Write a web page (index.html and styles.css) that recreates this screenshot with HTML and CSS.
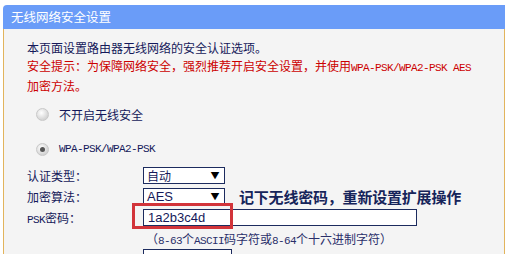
FILE: index.html
```html
<!DOCTYPE html>
<html>
  <head>
    <meta charset="utf-8">
    <link rel="stylesheet" href="styles.css">
  </head>
  <body>
    <div class="panel">
      <div class="panel-title">无线网络安全设置</div>
      <div class="panel-body">
        <p class="intro">本页面设置路由器无线网络的安全认证选项。</p>
        <p class="warn">安全提示：为保障网络安全，强烈推荐开启安全设置，并使用<span class="en">WPA-PSK/WPA2-PSK AES</span>加密方法。</p>

        <div class="radio-row first">
          <span class="radio"></span>
          <span>不开启无线安全</span>
        </div>
        <div class="radio-row">
          <span class="radio checked"></span>
          <span class="en">WPA-PSK/WPA2-PSK</span>
        </div>

        <div class="form-row">
          <label>认证类型：</label>
          <div class="select"><span>自动</span><span class="arrow">▼</span></div>
        </div>
        <div class="form-row">
          <label>加密算法：</label>
          <div class="select"><span class="latin">AES</span><span class="arrow">▼</span></div>
          <span class="note">记下无线密码，重新设置扩展操作</span>
        </div>
        <div class="form-row">
          <label><span class="en">PSK</span>密码：</label>
          <div class="psk-wrap">
            <div class="text-input"><span class="latin">1a2b3c4d</span></div>
            <div class="mark"></div>
          </div>
        </div>
        <div class="form-row">
          <label></label>
          <span class="hint">（<span class="en">8-63</span>个<span class="en">ASCII</span>码字符或<span class="en">8-64</span>个十六进制字符）</span>
        </div>
        <div class="form-row top">
          <label></label>
          <div class="select wide"></div>
        </div>
      </div>
    </div>
  </body>
</html>
```

FILE: styles.css
```css
/* 无线安全设置 */
html,
body {
  height: 100%;
  overflow: hidden;
}

body {
  margin: 0;
  background: #ffffff;
  font-family: "Noto Sans CJK SC", "Liberation Sans", sans-serif;
  font-size: 12px;
  color: #15195a;
}

.panel {
  margin: 5px 5px 0 3px;
}

.panel-title {
  height: 24px;
  line-height: 24px;
  padding-left: 8px;
  background: #6a9cf8;
  color: #ffffff;
  font-size: 12.5px;
  border-radius: 4px 0 0 0;
}

.panel-body {
  background: #f4f4f4;
  border-left: 1px solid #e2b45c;
  border-right: 1px solid #e2b45c;
  padding: 10px 0 0 23px;
  height: 300px;
}

p {
  margin: 0;
  line-height: 18px;
}

.warn {
  color: #cc0000;
  padding-right: 30px;
}

.en {
  font-family: "Liberation Mono", monospace;
  font-size: 11px;
  letter-spacing: -0.6px;
}

.latin {
  font-family: "Liberation Sans", sans-serif;
  font-size: 13px;
}

.radio-row {
  display: flex;
  align-items: center;
  gap: 10px;
  height: 20px;
  padding-left: 9px;
  margin-top: 15px;
}

.radio-row.first {
  margin-top: 9px;
}

.radio {
  width: 11px;
  height: 11px;
  border-radius: 50%;
  border: 1px solid #c8c8c8;
  background: radial-gradient(circle at 40% 35%, #ffffff, #d4d4d4 70%);
  position: relative;
}

.radio.checked::after {
  content: "";
  position: absolute;
  left: 3px;
  top: 3px;
  width: 5px;
  height: 5px;
  border-radius: 50%;
  background: #555555;
}

.form-row {
  display: flex;
  align-items: center;
  height: 21px;
}

.form-row.top {
  align-items: flex-start;
}

.radio-row + .form-row {
  margin-top: 6px;
}

.form-row label {
  width: 116px;
  flex: none;
}

.select {
  width: 77px;
  height: 15px;
  border: 1px solid #1c2b5e;
  background: #ffffff;
  display: flex;
  align-items: center;
  justify-content: space-between;
  padding: 0 0 0 3px;
  box-sizing: content-box;
}

.select .arrow {
  font-size: 9px;
  color: #000000;
  width: 18px;
  text-align: center;
}

.select.wide {
  width: 84px;
}

.note {
  margin-left: 14px;
  font-size: 15px;
  font-weight: bold;
  color: #16245a;
  letter-spacing: -0.2px;
}

.psk-wrap {
  position: relative;
}

.text-input {
  width: 268px;
  height: 15px;
  border: 1px solid #1c2b5e;
  background: #ffffff;
  padding-left: 4px;
  display: flex;
  align-items: center;
}

.mark {
  position: absolute;
  left: -11px;
  top: -6px;
  width: 95px;
  height: 20px;
  border: 3px solid #d2343a;
}

.hint {
  color: #2a2f6a;
  margin-left: 3px;
}
```
